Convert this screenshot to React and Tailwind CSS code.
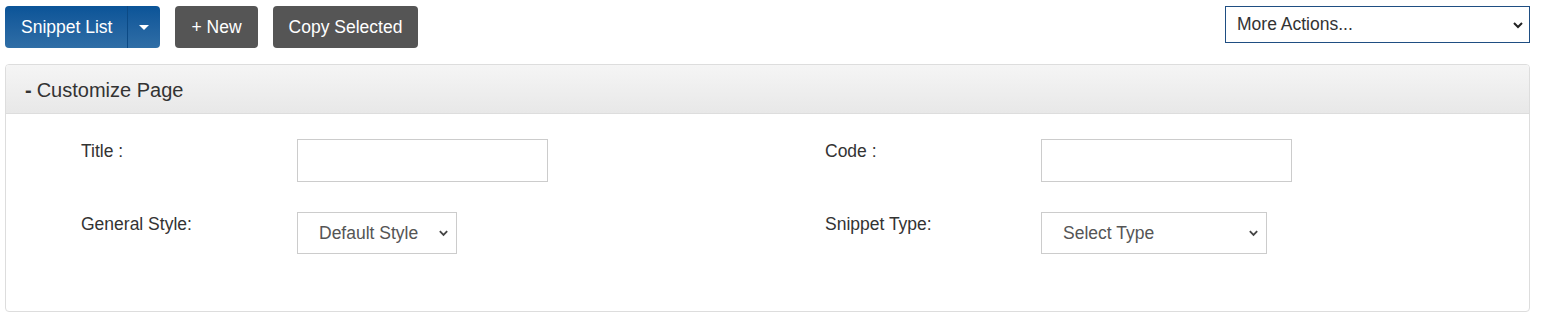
import React, { useState } from "react";

const font = { fontFamily: '"Liberation Sans", Arial, sans-serif' };

const Chevron = ({ className }) => (
  <svg viewBox="0 0 12 8" className={className} fill="none">
    <path d="M2 2l4 4 4-4" stroke="currentColor" strokeWidth="2" />
  </svg>
);

const FormSelect = ({ width, value, options }) => (
  <div className={`relative ${width} h-[42px]`}>
    <select
      defaultValue={value}
      className="appearance-none w-full h-full border border-[#cccccc] bg-white pl-[21px] pr-8 text-[17.5px] text-[#555555] outline-none"
    >
      {options.map((o) => (
        <option key={o}>{o}</option>
      ))}
    </select>
    <Chevron className="absolute right-[8px] top-[17px] w-[11px] h-[8px] text-[#444444] pointer-events-none" />
  </div>
);

const Field = ({ label, children }) => (
  <div className="flex items-start">
    <label className="w-[216px] pt-0 text-[17.5px] leading-[24px] text-[#333333]">{label}</label>
    {children}
  </div>
);

export default function App() {
  const [title, setTitle] = useState("");
  const [code, setCode] = useState("");
  const [open, setOpen] = useState(true);

  return (
    <div className="w-[1547px] h-[318px] bg-white px-[5px] pt-[6px]" style={font}>
      {/* Toolbar */}
      <div className="flex items-start justify-between pr-[12px]">
        <div className="flex gap-[15px]">
          <div className="flex h-[42px] rounded-[4px] overflow-hidden bg-gradient-to-b from-[#0a5498] to-[#2f6ea6] text-white text-[17.5px]">
            <button className="pl-[16px] pr-[15px] border-r border-[#0c4a85]">Snippet List</button>
            <button className="w-[32px] flex items-center justify-center">
              <span className="w-0 h-0 border-l-[5px] border-r-[5px] border-t-[5px] border-l-transparent border-r-transparent border-t-white" />
            </button>
          </div>
          <button className="h-[42px] px-[16px] rounded-[4px] bg-[#555555] text-white text-[17.5px]">+ New</button>
          <button className="h-[42px] px-[16px] rounded-[4px] bg-[#555555] text-white text-[17.5px]">Copy Selected</button>
        </div>
        <div className="relative w-[305px] h-[37px]">
          <select className="appearance-none w-full h-full border border-[#1f4e82] bg-white pl-[11px] text-[17.5px] text-[#333333] outline-none">
            <option>More Actions...</option>
          </select>
          <Chevron className="absolute right-[6px] top-[15px] w-[12px] h-[8px] text-[#222222] pointer-events-none" />
        </div>
      </div>

      {/* Panel */}
      <div className="mt-[16px] mr-[12px] h-[248px] border border-[#dddddd] rounded-[4px] overflow-hidden">
        <div
          className="h-[49px] flex items-center pt-[2px] px-[19px] bg-gradient-to-b from-[#f5f5f5] to-[#e8e8e8] border-b border-[#dddddd] text-[20px] text-[#333333] cursor-pointer"
          onClick={() => setOpen(!open)}
        >
          <span className="font-bold mr-[5px]">-</span>
          Customize Page
        </div>
        {open && (
          <div className="grid grid-cols-2 pl-[75px] pt-[25px] gap-y-[30px]">
            <Field label="Title :">
              <input
                value={title}
                onChange={(e) => setTitle(e.target.value)}
                className="w-[251px] h-[43px] border border-[#cccccc] px-3 outline-none"
              />
            </Field>
            <div className="pl-[20px]">
              <Field label="Code :">
                <input
                  value={code}
                  onChange={(e) => setCode(e.target.value)}
                  className="w-[251px] h-[43px] border border-[#cccccc] px-3 outline-none"
                />
              </Field>
            </div>
            <Field label="General Style:">
              <FormSelect width="w-[160px]" value="Default Style" options={["Default Style"]} />
            </Field>
            <div className="pl-[20px]">
              <Field label="Snippet Type:">
                <FormSelect width="w-[226px]" value="Select Type" options={["Select Type"]} />
              </Field>
            </div>
          </div>
        )}
      </div>
    </div>
  );
}
